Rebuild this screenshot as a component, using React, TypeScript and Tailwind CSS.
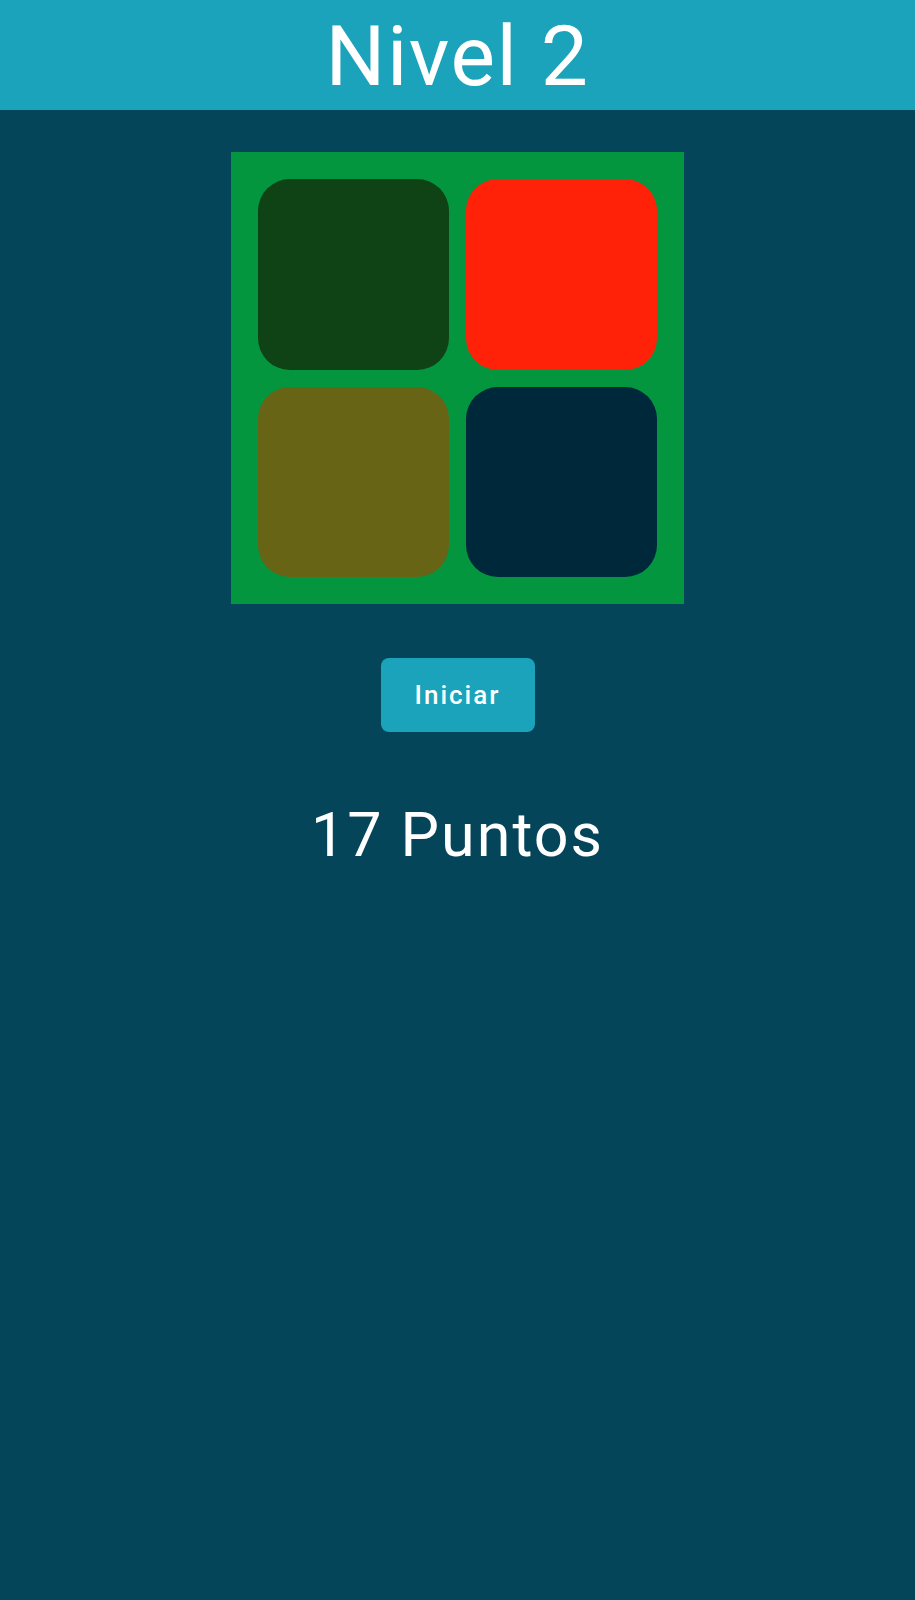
import React from 'react';

const tiles = [
  { id: 'green', color: 'bg-[#0f4214]' },
  { id: 'red', color: 'bg-[#ff2208]' },
  { id: 'yellow', color: 'bg-[#676416]' },
  { id: 'blue', color: 'bg-[#00283b]' },
];

const App: React.FC = () => {
  return (
    <div className="min-h-[1600px] w-full bg-[#05455a] font-['Roboto',sans-serif] flex flex-col items-center">
      {/* Header */}
      <div className="w-full h-[110px] bg-[#1aa3bb] flex items-center justify-center pt-[4px]">
        <h1 className="text-[84px] leading-[90px] tracking-[1.5px] text-white font-normal">Nivel 2</h1>
      </div>

      {/* Board */}
      <div className="mt-[42px] w-[453px] h-[452px] bg-[#03963f] p-[27px] grid grid-cols-2 gap-[17px]">
        {tiles.map((t) => (
          <div key={t.id} className={`${t.color} rounded-[32px]`} />
        ))}
      </div>

      {/* Start */}
      <button
        type="button"
        className="mt-[54px] w-[154px] h-[74px] rounded-[8px] bg-[#1aa3bb] text-white text-[26px] leading-none font-medium tracking-[2px] flex items-center justify-center"
      >
        Iniciar
      </button>

      {/* Score */}
      <p className="mt-[71px] text-[61px] leading-[64px] tracking-[2px] text-white font-normal">17 Puntos</p>
    </div>
  );
};

export default App;
